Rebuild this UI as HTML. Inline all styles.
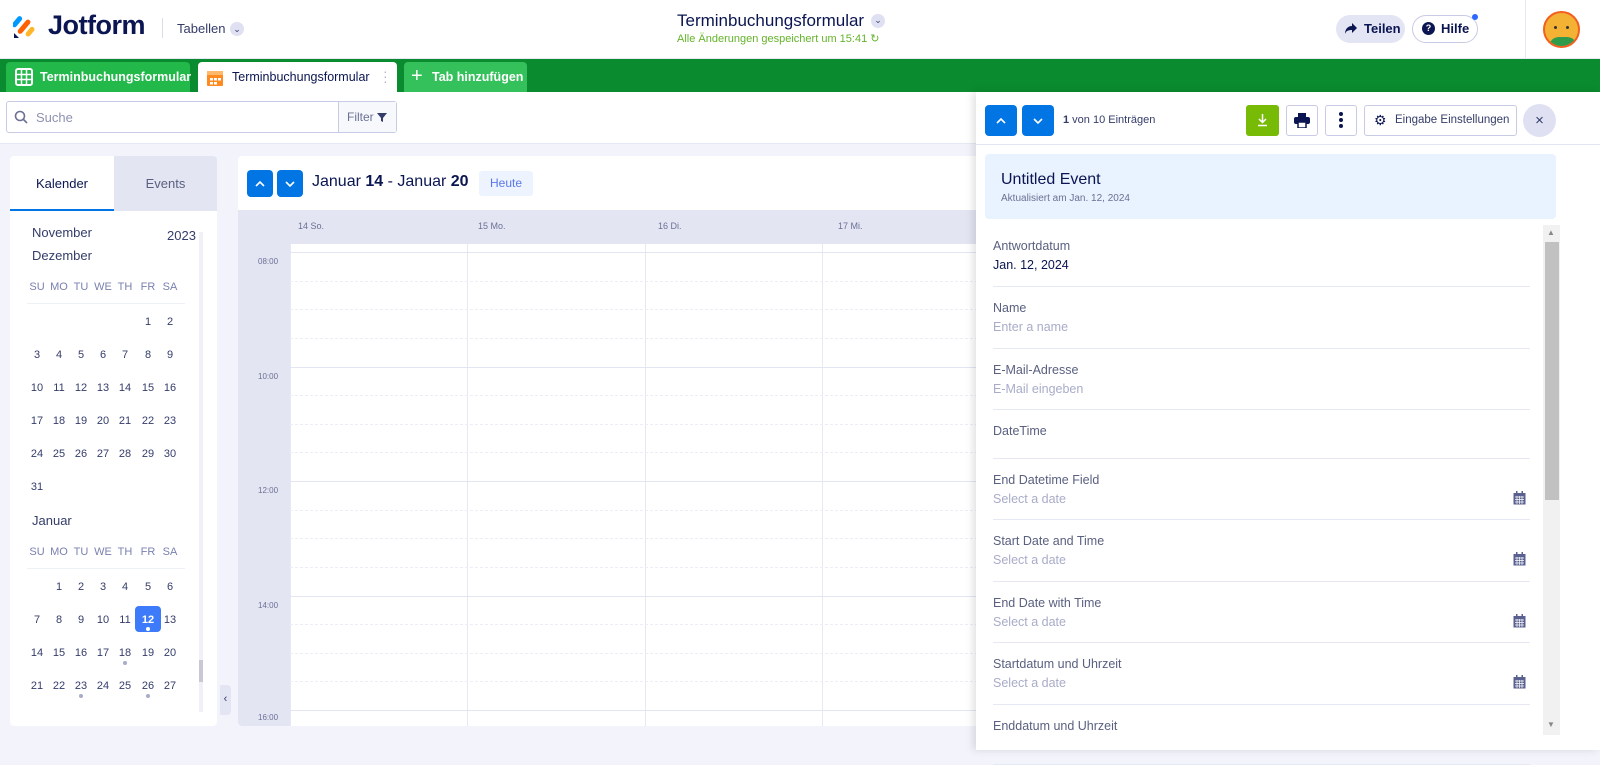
<!DOCTYPE html>
<html><head><meta charset="utf-8"><style>
*{box-sizing:border-box;margin:0;padding:0}
body{width:1600px;height:750px;overflow:hidden;background:#f3f3fb;font-family:"Liberation Sans",sans-serif;position:relative;color:#0a1551}
.abs{position:absolute}
.btnb{position:absolute;background:#0075e3;border-radius:4px}
.btnb svg{position:absolute;left:50%;top:50%;transform:translate(-50%,-50%)}
.dn{position:absolute;font-size:11px;color:#343c6a;width:22px;text-align:center}
.wd{position:absolute;font-size:11px;color:#7a80b0;width:22px;text-align:center}
.fl{position:absolute;left:993px;width:537px;border-bottom:1px solid #e6e8f3}
.fl .l{position:absolute;left:0;font-size:12.5px;color:#5a6080}
.fl .v{position:absolute;left:0;font-size:12.5px;color:#a8acc8}
.cal{position:absolute;right:4px}
</style></head><body>
<!-- header -->
<div class="abs" style="left:0;top:0;width:1600px;height:59px;background:#fff;border-bottom:1px solid #e6e8f3"></div>
<svg class="abs" style="left:13px;top:13px" width="24" height="26" viewBox="0 0 24 26"><rect x="2" y="2" width="5" height="13" rx="2.5" transform="rotate(40 4 8)" fill="#0099ff"/><rect x="9" y="5" width="5" height="17" rx="2.5" transform="rotate(40 11 13)" fill="#ff6100"/><rect x="15" y="13" width="5" height="11" rx="2.5" transform="rotate(40 17 18)" fill="#ffb629"/><path d="M1 25 L1 20 L6 25Z" fill="#0a1551"/></svg>
<div class="abs" style="left:48px;top:10px;font-size:27px;font-weight:bold;color:#0a1551;letter-spacing:-0.5px">Jotform</div>
<div class="abs" style="left:162px;top:18px;width:1px;height:20px;background:#dadcea"></div>
<div class="abs" style="left:177px;top:21px;font-size:13px;color:#343c6a">Tabellen</div>
<div class="abs" style="left:230px;top:22px;width:14px;height:14px;border-radius:7px;background:#dfe1f3;font-size:9px;text-align:center;line-height:14px;color:#343c6a">⌄</div>
<div class="abs" style="left:677px;top:11px;font-size:17px;color:#0a1551">Terminbuchungsformular</div>
<div class="abs" style="left:871px;top:14px;width:14px;height:14px;border-radius:7px;background:#dfe1f3;font-size:9px;text-align:center;line-height:12px;color:#343c6a">⌄</div>
<div class="abs" style="left:677px;top:32px;font-size:11px;color:#64b32a">Alle Änderungen gespeichert um 15:41 ↻</div>
<div class="abs" style="left:1336px;top:15px;width:69px;height:28px;border-radius:14px;background:#e3e5f5;font-size:13px;font-weight:bold;line-height:28px;padding-left:28px;color:#0a1551">Teilen</div>
<svg class="abs" style="left:1344px;top:22px" width="14" height="13" viewBox="0 0 14 13"><path d="M8 1 L13 6 L8 11 V8 C4 8 2 9 1 12 C1 7 4 4 8 4Z" fill="#0a1551"/></svg>
<div class="abs" style="left:1412px;top:15px;width:66px;height:28px;border-radius:14px;background:#fff;border:1px solid #c8cbe6;font-size:13px;font-weight:bold;line-height:26px;padding-left:28px;color:#0a1551">Hilfe</div>
<div class="abs" style="left:1422px;top:22px;width:13px;height:13px;border-radius:7px;background:#0a1551;color:#fff;font-size:9px;font-weight:bold;text-align:center;line-height:13px">?</div>
<div class="abs" style="left:1472px;top:14px;width:6px;height:6px;border-radius:3px;background:#2e69ff"></div>
<div class="abs" style="left:1525px;top:0;width:1px;height:59px;background:#e6e8f3"></div>
<div class="abs" style="left:1543px;top:11px;width:37px;height:37px;border-radius:19px;background:#f4b234;border:2px solid #f25f1e;overflow:hidden"><div style="position:absolute;left:4px;top:24px;width:28px;height:14px;background:#2f9a4a;border-radius:10px 10px 0 0"></div><div style="position:absolute;left:9px;top:13px;width:3px;height:3px;background:#333;border-radius:2px"></div><div style="position:absolute;left:21px;top:13px;width:3px;height:3px;background:#333;border-radius:2px"></div></div>
<!-- tab bar -->
<div class="abs" style="left:0;top:59px;width:1600px;height:33px;background:#0b8b2f"></div>
<div class="abs" style="left:6px;top:62px;width:184px;height:30px;background:#22b84a;border-radius:4px 4px 0 0;color:#fff;font-size:12.5px;font-weight:bold;line-height:30px;padding-left:34px">Terminbuchungsformular</div>
<svg class="abs" style="left:15px;top:68px" width="18" height="18" viewBox="0 0 18 18"><rect x="1" y="1" width="16" height="16" rx="2" fill="none" stroke="#fff" stroke-width="2"/><path d="M1 6.5H17M1 11.5H17M6.5 1V17M11.5 1V17" stroke="#fff" stroke-width="1.5"/></svg>
<div class="abs" style="left:198px;top:62px;width:199px;height:30px;background:#fff;border-radius:4px 4px 0 0;color:#0a1551;font-size:12.5px;line-height:30px;padding-left:34px">Terminbuchungsformular</div>
<svg class="abs" style="left:206px;top:69px" width="18" height="18" viewBox="0 0 18 18"><rect x="1" y="2" width="16" height="15" rx="1" fill="#ff8a1f"/><rect x="1" y="2" width="16" height="4" fill="#ffb96b"/><g fill="#fff"><rect x="4" y="9" width="3" height="2.5"/><rect x="8" y="9" width="3" height="2.5"/><rect x="12" y="9" width="3" height="2.5"/><rect x="4" y="13" width="3" height="2.5"/><rect x="8" y="13" width="3" height="2.5"/></g></svg>
<div class="abs" style="left:383px;top:69px;width:3px;color:#b4b7cc;font-size:14px;line-height:5px">·<br>·<br>·</div>
<div class="abs" style="left:404px;top:62px;width:123px;height:30px;background:#34c05a;border-radius:4px 4px 0 0;color:#fff;font-size:12.5px;font-weight:bold;line-height:30px;padding-left:28px">Tab hinzufügen</div>
<div class="abs" style="left:411px;top:66px;color:#fff;font-size:20px;line-height:20px">+</div>
<!-- search area -->
<div class="abs" style="left:0;top:92px;width:1600px;height:52px;background:#fff;border-bottom:1px solid #e6e8f3"></div>
<div class="abs" style="left:6px;top:101px;width:391px;height:32px;border:1px solid #c8cbe6;border-radius:3px;background:#fff"></div>
<svg class="abs" style="left:14px;top:110px" width="14" height="14" viewBox="0 0 14 14"><circle cx="6" cy="6" r="4.5" fill="none" stroke="#6b7094" stroke-width="1.6"/><path d="M9.5 9.5L13 13" stroke="#6b7094" stroke-width="1.6"/></svg>
<div class="abs" style="left:36px;top:110px;font-size:13px;color:#8e92b2">Suche</div>
<div class="abs" style="left:338px;top:102px;width:58px;height:30px;border-left:1px solid #c8cbe6;background:#f7f8fc;font-size:12px;color:#6b7094;line-height:30px;padding-left:8px">Filter</div>
<svg class="abs" style="left:377px;top:113px" width="10" height="9" viewBox="0 0 10 9"><path d="M0 0H10L6 5V9L4 8V5Z" fill="#343c6a"/></svg>
<!-- left panel -->
<div class="abs" style="left:10px;top:156px;width:207px;height:570px;background:#fff;border-radius:4px"></div>
<div class="abs" style="left:114px;top:156px;width:103px;height:55px;background:#e3e5f3;border-radius:0 4px 0 0;font-size:13px;color:#5a6080;text-align:center;line-height:55px">Events</div>
<div class="abs" style="left:10px;top:156px;width:104px;height:55px;font-size:13px;color:#0a1551;text-align:center;line-height:55px;border-bottom:2px solid #0075e3">Kalender</div>
<div class="abs" style="left:32px;top:225px;font-size:13px;color:#343c6a">November</div>
<div class="abs" style="left:32px;top:248px;font-size:13px;color:#343c6a">Dezember</div>
<div class="abs" style="left:167px;top:228px;font-size:13px;color:#343c6a">2023</div>
<div class="abs" style="left:199px;top:232px;width:4px;height:480px;background:#f0f1f7"></div>
<div class="abs" style="left:199px;top:660px;width:4px;height:22px;background:#c8c9d4"></div>
<div class="abs" style="left:27px;top:303px;width:158px;height:1px;background:#eef0f8"></div>
<div class="abs" style="left:27px;top:568px;width:158px;height:1px;background:#eef0f8"></div>
<div class="abs" style="left:32px;top:513px;font-size:13px;color:#343c6a">Januar</div>
<div class="abs" style="left:220px;top:685px;width:11px;height:30px;background:#e3e5f3;border-radius:0 4px 4px 0;font-size:11px;color:#343c6a;text-align:center;line-height:28px">‹</div>
<div id="mc"></div>
<!-- main calendar -->
<div class="abs" style="left:238px;top:156px;width:760px;height:570px;background:#fff;border-radius:4px;overflow:hidden">
 <div class="abs" style="left:0;top:54px;width:760px;height:34px;background:#e3e5f3"></div>
 <div class="abs" style="left:0;top:88px;width:52px;height:482px;background:#e3e5f3"></div>
 <div class="abs" style="left:60px;top:65px;font-size:9px;color:#6b7094">14 So.</div>
 <div class="abs" style="left:240px;top:65px;font-size:9px;color:#6b7094">15 Mo.</div>
 <div class="abs" style="left:420px;top:65px;font-size:9px;color:#6b7094">16 Di.</div>
 <div class="abs" style="left:600px;top:65px;font-size:9px;color:#6b7094">17 Mi.</div>
 <div id="grid"></div>
</div>
<div class="btnb" style="left:247px;top:170px;width:26px;height:27px"><svg width="10" height="6" viewBox="0 0 10 6"><path d="M1 5L5 1L9 5" fill="none" stroke="#fff" stroke-width="1.6"/></svg></div>
<div class="btnb" style="left:277px;top:170px;width:26px;height:27px"><svg width="10" height="6" viewBox="0 0 10 6"><path d="M1 1L5 5L9 1" fill="none" stroke="#fff" stroke-width="1.6"/></svg></div>
<div class="abs" style="left:312px;top:173px;font-size:16px;color:#0a1551">Januar <b>14</b> - Januar <b>20</b></div>
<div class="abs" style="left:479px;top:171px;width:54px;height:25px;background:#edf3ff;border-radius:3px;font-size:12px;color:#5a79e8;text-align:center;line-height:25px">Heute</div>
<!-- right panel -->
<div class="abs" style="left:976px;top:92px;width:624px;height:658px;background:#fff;box-shadow:-3px 0 8px rgba(0,0,0,0.12)"></div>
<div class="abs" style="left:976px;top:144px;width:624px;height:1px;background:#e3e5f3"></div>
<div class="btnb" style="left:985px;top:105px;width:32px;height:31px"><svg width="10" height="6" viewBox="0 0 10 6"><path d="M1 5L5 1L9 5" fill="none" stroke="#fff" stroke-width="1.6"/></svg></div>
<div class="btnb" style="left:1022px;top:105px;width:32px;height:31px"><svg width="10" height="6" viewBox="0 0 10 6"><path d="M1 1L5 5L9 1" fill="none" stroke="#fff" stroke-width="1.6"/></svg></div>
<div class="abs" style="left:1063px;top:114px;font-size:11px;color:#343c6a"><b>1</b> von 10 Einträgen</div>
<div class="abs" style="left:1246px;top:105px;width:33px;height:31px;background:#78bb07;border-radius:3px"></div>
<svg class="abs" style="left:1256px;top:113px" width="13" height="14" viewBox="0 0 13 14"><path d="M6.5 1V9M3 6L6.5 9.5L10 6M2 12.5H11" fill="none" stroke="#fff" stroke-width="1.5"/></svg>
<div class="abs" style="left:1286px;top:105px;width:32px;height:31px;border:1px solid #c8cbe6;border-radius:3px"></div>
<svg class="abs" style="left:1294px;top:113px" width="16" height="15" viewBox="0 0 16 15"><rect x="4" y="0" width="8" height="4" fill="#0a1551"/><rect x="0" y="4" width="16" height="7" rx="2" fill="#0a1551"/><rect x="4" y="9" width="8" height="6" fill="#fff" stroke="#0a1551" stroke-width="1.5"/></svg>
<div class="abs" style="left:1325px;top:105px;width:32px;height:31px;border:1px solid #c8cbe6;border-radius:3px"></div>
<div class="abs" style="left:1339px;top:112px;width:4px;height:4px;border-radius:2px;background:#0a1551;box-shadow:0 6px 0 #0a1551,0 12px 0 #0a1551"></div>
<div class="abs" style="left:1364px;top:105px;width:153px;height:31px;border:1px solid #c8cbe6;border-radius:3px;font-size:11.5px;color:#343c6a;line-height:29px;padding-left:30px">Eingabe Einstellungen</div>
<div class="abs" style="left:1374px;top:112px;font-size:14px;color:#0a1551;line-height:16px">⚙</div>
<div class="abs" style="left:1523px;top:104px;width:33px;height:33px;border-radius:17px;background:#dfe1f3;text-align:center;line-height:33px;font-size:15px;color:#343c6a">×</div>
<div class="abs" style="left:985px;top:154px;width:571px;height:65px;background:#e9f3ff;border-radius:4px"></div>
<div class="abs" style="left:1001px;top:171px;font-size:16px;color:#0a1551">Untitled Event</div>
<div class="abs" style="left:1001px;top:193px;font-size:10px;color:#6b7094">Aktualisiert am Jan. 12, 2024</div>
<div class="abs" style="left:1543px;top:225px;width:17px;height:510px;background:#f1f1f1"></div>
<div class="abs" style="left:1545px;top:242px;width:14px;height:258px;background:#c1c1c1"></div>
<div class="abs" style="left:1547px;top:228px;font-size:8px;color:#888">▲</div>
<div class="abs" style="left:1547px;top:720px;font-size:8px;color:#888">▼</div>
<div id="fields"></div>
<script>
var h='',cx=[37,59,81,103,125,148,170],wd=['SU','MO','TU','WE','TH','FR','SA'];
function hdr(y){for(var i=0;i<7;i++)h+='<div class="wd" style="left:'+(cx[i]-11)+'px;top:'+y+'px">'+wd[i]+'</div>';}
function mon(start,n,y0,dots){var c=start,r=0;for(var d=1;d<=n;d++){var x=cx[c]-11,y=y0+r*33;
 if(d==12&&y0>500){h+='<div class="abs" style="left:135px;top:'+(y-8)+'px;width:26px;height:26px;background:#3e7bfa;border-radius:4px"></div><div class="dn" style="left:'+x+'px;top:'+y+'px;color:#fff;font-weight:bold">12</div><div class="abs" style="left:146px;top:'+(y+13)+'px;width:4px;height:4px;border-radius:2px;background:#fff"></div>';}
 else h+='<div class="dn" style="left:'+x+'px;top:'+y+'px">'+d+'</div>';
 if(dots&&dots.indexOf(d)>=0)h+='<div class="abs" style="left:'+(cx[c]-2)+'px;top:'+(y+14)+'px;width:4px;height:4px;border-radius:2px;background:#a8acc8"></div>';
 c++;if(c==7){c=0;r++;}}}
hdr(281);mon(5,31,316);hdr(546);mon(1,27,581,[18,23,26]);
document.getElementById('mc').outerHTML=h;
var g='';var cols=[52,229,407,584,760];
for(var i=0;i<4;i++)g+='<div class="abs" style="left:'+cols[i]+'px;top:88px;width:1px;height:482px;background:#e6e8f3"></div>';
g+='<div class="abs" style="left:52px;top:96px;width:708px;height:1px;background:#e3e5f3"></div>';
for(var k=0;k<4;k++){var y=96+k*114.5;g+='<div class="abs" style="left:20px;top:'+(y+5)+'px;font-size:8px;color:#6b7094">'+['08:00','10:00','12:00','14:00'][k]+'</div>';
 for(var j=1;j<4;j++)g+='<div class="abs" style="left:52px;top:'+(y+j*28.6)+'px;width:708px;border-top:1px dashed #eceef6"></div>';
 g+='<div class="abs" style="left:52px;top:'+(y+114.5)+'px;width:708px;height:1px;background:#e3e5f3"></div>';}
g+='<div class="abs" style="left:20px;top:557px;font-size:8px;color:#6b7094">16:00</div>';
document.getElementById('grid').outerHTML=g;
var F=[['Antwortdatum','Jan. 12, 2024',225,62,1],['Name','Enter a name',287,62],['E-Mail-Adresse','E-Mail eingeben',349,61],['DateTime','',410,49],['End Datetime Field','Select a date',459,61,0,1],['Start Date and Time','Select a date',520,62,0,1],['End Date with Time','Select a date',582,61,0,1],['Startdatum und Uhrzeit','Select a date',643,62,0,1],['Enddatum und Uhrzeit','',705,60]];
var f='';F.forEach(function(a){f+='<div class="fl" style="top:'+a[2]+'px;height:'+a[3]+'px"><div class="l" style="top:'+(14)+'px">'+a[0]+'</div><div class="v" style="top:33px;'+(a[4]?'color:#0a1551':'')+'">'+a[1]+'</div>'+(a[5]?'<svg class="cal" style="top:32px" width="13" height="14" viewBox="0 0 13 14"><rect x="0.5" y="2" width="12" height="11.5" fill="#5a6090"/><rect x="3" y="0" width="1.5" height="3" fill="#5a6090"/><rect x="8.5" y="0" width="1.5" height="3" fill="#5a6090"/><path d="M2 6H11M2 8.5H11M2 11H11M4 5V13M6.5 5V13M9 5V13" stroke="#fff" stroke-width="0.7"/></svg>':'')+'</div>';});
document.getElementById('fields').outerHTML=f;
</script>
</body></html>
